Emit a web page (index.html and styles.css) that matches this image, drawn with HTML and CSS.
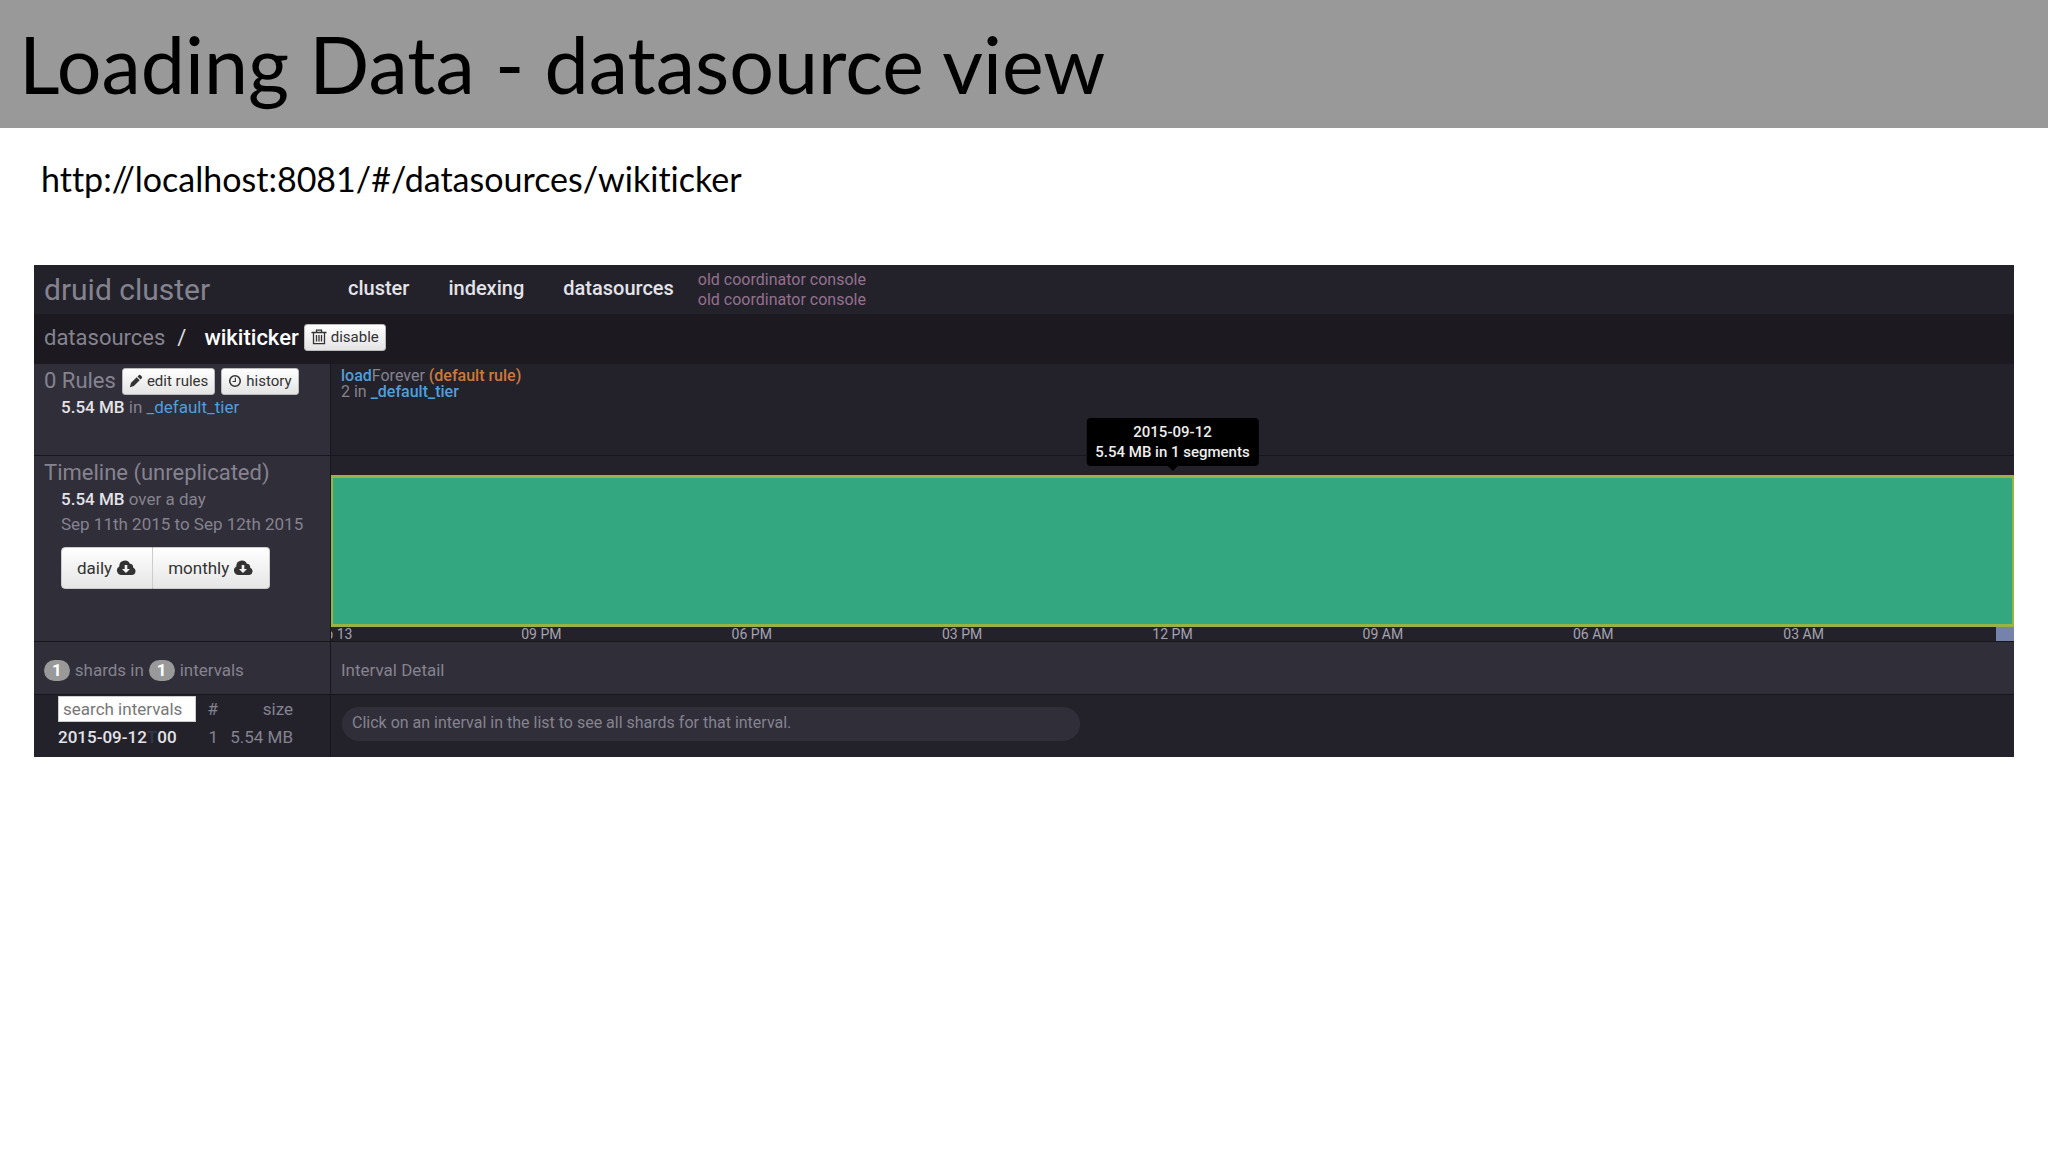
FILE: index.html
```
<!DOCTYPE html>
<html lang="en">
<head>
  <meta charset="UTF-8">
  <title>Loading Data - datasource view</title>
  <meta name="viewport" content="width=device-width, initial-scale=1.0">
  <link rel="stylesheet" href="styles.css">
</head>
<body>

  <header class="slide-title">
    <h1>Loading Data - datasource view</h1>
  </header>

  <p class="slide-url">http://localhost:8081/#/datasources/wikiticker</p>

  <main class="console">
    <div class="topbar">
      <div class="brand">druid cluster</div>
      <nav>
        <a href="#">cluster</a>
        <a href="#">indexing</a>
        <a href="#">datasources</a>
        <div class="old-links">
          <a href="#">old coordinator console</a>
          <a href="#">old coordinator console</a>
        </div>
      </nav>
    </div>

    <div class="breadcrumb">
      <a href="#">datasources</a>
      <span class="slash">/</span>
      <strong>wikiticker</strong>
      <button type="button" class="btn">
        <svg class="icon" viewBox="0 0 16 16" fill="none" stroke="currentColor" stroke-width="1.3">
          <path d="M0.500 3.500h15M5.500 3.500V1.200h5v2.300M2.500 3.500v11.200h11V3.500M5.500 6v6.500M8 6v6.500M10.500 6v6.500"/>
        </svg>
        disable
      </button>
    </div>

    <div class="row rules">
      <section class="side">
        <div class="side-head">
          <h2>0 Rules</h2>
          <button type="button" class="btn">
            <svg class="icon" viewBox="0 0 16 16" fill="currentColor">
              <path d="M1 15l1.200-4.600 6.600-6.600 3.400 3.400-6.600 6.600zM9.700 2.900l1.500-1.500q1-.9 2 0l1.400 1.400q.9 1 0 2l-1.500 1.500z"/>
            </svg>
            edit rules
          </button>
          <button type="button" class="btn">
            <svg class="icon" viewBox="0 0 16 16" fill="none" stroke="currentColor" stroke-width="1.8">
              <circle cx="8" cy="8" r="6"/>
              <path d="M8.400 4.200v4.400H5.200" stroke-width="1.3"/>
            </svg>
            history
          </button>
        </div>
        <p class="side-text"><b>5.54 MB</b> in <a href="#">_default_tier</a></p>
      </section>
      <section class="rule-list">
        <div><a href="#">load</a>Forever <span class="default-rule">(default rule)</span></div>
        <div>2 in <a href="#">_default_tier</a></div>
      </section>
    </div>

    <div class="row timeline">
      <section class="side">
        <h2>Timeline (unreplicated)</h2>
        <p class="side-text"><b>5.54 MB</b> over a day</p>
        <p class="side-text">Sep 11th 2015 to Sep 12th 2015</p>
        <div class="btn-group">
          <button type="button">daily
            <svg class="icon-cloud" viewBox="0 0 20 16">
              <path fill="currentColor" d="M5 15a4.600 4.600 0 0 1-2.200-8.600A5.600 5.600 0 0 1 13.400 3.700 3.200 3.200 0 0 1 16.600 7.400 4 4 0 0 1 16 15z"/>
              <path fill="#f4f4f4" d="M8.200 5h2.600v4h2.700l-4 4-4-4h2.700z"/>
            </svg>
          </button>
          <button type="button">monthly
            <svg class="icon-cloud" viewBox="0 0 20 16">
              <path fill="currentColor" d="M5 15a4.600 4.600 0 0 1-2.200-8.600A5.600 5.600 0 0 1 13.400 3.700 3.200 3.200 0 0 1 16.600 7.400 4 4 0 0 1 16 15z"/>
              <path fill="#f4f4f4" d="M8.200 5h2.600v4h2.700l-4 4-4-4h2.700z"/>
            </svg>
          </button>
        </div>
      </section>
      <section class="chart">
        <div class="bar">
          <div class="tooltip">2015-09-12<br>5.54 MB in 1 segments</div>
        </div>
        <div class="axis">
          <span>Sep 13</span>
          <span>09 PM</span>
          <span>06 PM</span>
          <span>03 PM</span>
          <span>12 PM</span>
          <span>09 AM</span>
          <span>06 AM</span>
          <span>03 AM</span>
          <div class="brush"></div>
        </div>
      </section>
    </div>

    <div class="row interval-head">
      <section class="side">
        <span class="badge">1</span> shards in <span class="badge">1</span> intervals
      </section>
      <section class="detail-title">Interval Detail</section>
    </div>

    <div class="row interval-body">
      <section class="interval-list">
        <table>
          <thead>
            <tr>
              <th><input type="text" placeholder="search intervals" aria-label="search intervals"></th>
              <th>#</th>
              <th>size</th>
            </tr>
          </thead>
          <tbody>
            <tr>
              <td class="interval">2015-09-12<span>T</span>00</td>
              <td>1</td>
              <td>5.54 MB</td>
            </tr>
          </tbody>
        </table>
      </section>
      <section class="detail">
        <p class="hint">Click on an interval in the list to see all shards for that interval.</p>
      </section>
    </div>
  </main>

</body>
</html>
```
FILE: styles.css
```
* {
  box-sizing: border-box;
}
body {
  margin: 0;
  background: #fff;
  color: #000;
  font-family: Lato, sans-serif;
  font-variant-ligatures: none;
}
h1, h2, p {
  margin: 0;
  font-weight: 400;
}
a {
  color: #4f9fdc;
  text-decoration: none;
}
.slide-title {
  background: #999;
  padding: 16px 19px;
}
.slide-title h1 {
  font-size: 79px;
  line-height: 96px;
}
.slide-url {
  padding: 27px 41px 62px;
  font-size: 34px;
  line-height: 48px;
}

/* druid console */
.console {
  margin: 0 34px;
  background: #23222b;
  color: #85838f;
  font-family: Roboto, sans-serif;
  font-size: 17px;
  line-height: 25px;
}
.topbar,
.row {
  display: grid;
  grid-template-columns: 15% 1fr;
}
.topbar {
  height: 49px;
  align-items: center;
}
.brand {
  padding-left: 10px;
  font-size: 30px;
}
.topbar nav {
  display: flex;
  align-items: flex-start;
  gap: 39px;
  padding-left: 17px;
}
.topbar nav a {
  color: #e3e3e8;
  font-size: 20px;
  font-weight: 500;
  line-height: 36px;
}
.topbar nav .old-links {
  display: flex;
  flex-direction: column;
  margin-left: -15px;
}
.topbar nav .old-links a {
  color: #95708f;
  font-size: 16px;
  font-weight: 400;
  line-height: 20px;
}
.breadcrumb {
  display: flex;
  align-items: center;
  height: 50px;
  padding: 0 10px 4px;
  background: #1c1a20;
  font-size: 22px;
}
.breadcrumb a {
  color: #85838f;
}
.breadcrumb .slash {
  margin: 0 18px 0 12px;
  color: #ddd;
}
.breadcrumb strong {
  margin-right: 5px;
  color: #fff;
  font-weight: 500;
}
.btn {
  display: flex;
  align-items: center;
  gap: 4px;
  height: 27px;
  padding: 0 6px;
  border: 1px solid #bbb;
  border-radius: 3px;
  background: linear-gradient(#fff, #e4e4e4);
  color: #333;
  font: 15px Roboto, sans-serif;
}
.icon {
  width: 14px;
  height: 16px;
}
.breadcrumb .icon {
  width: 16px;
}
.row {
  border-bottom: 1px solid #17161d;
}
.side {
  padding: 3px 10px;
  background: #302e39;
  border-right: 1px solid #17161d;
}
.side h2 {
  font-size: 22px;
  line-height: 28px;
}
.side-head {
  display: flex;
  align-items: center;
  gap: 6px;
}
.side-text {
  padding-left: 17px;
}
.side-text b {
  color: #e3e3e8;
  font-weight: 500;
}
.rules {
  height: 92px;
}
.rule-list {
  padding: 4px 10px;
  font-size: 16px;
  line-height: 16px;
}
.rule-list a,
.default-rule {
  font-weight: 500;
}
.default-rule {
  color: #d0783a;
}
.timeline {
  height: 186px;
}
.btn-group {
  display: flex;
  margin: 10px 0 0 17px;
}
.btn-group button {
  display: flex;
  align-items: center;
  gap: 4px;
  height: 42px;
  padding: 0 15px;
  border: 1px solid #ccc;
  background: linear-gradient(#fff, #e6e6e6);
  color: #333;
  font: 17px Roboto, sans-serif;
}
.btn-group button:first-child {
  border-radius: 4px 0 0 4px;
}
.btn-group button:last-child {
  border-left: 0;
  border-radius: 0 4px 4px 0;
}
.icon-cloud {
  width: 21px;
  height: 16px;
}
.chart {
  display: flex;
  flex-direction: column;
  min-width: 0;
  padding-top: 19px;
}
.bar {
  position: relative;
  flex: 1;
  border: 2px solid #98b344;
  border-width: 3px 2px;
  background: #33a780;
}
.tooltip {
  position: absolute;
  bottom: 100%;
  left: 50%;
  margin-bottom: 12px;
  padding: 4px 9px;
  transform: translateX(-50%);
  border-radius: 4px;
  background: #000;
  color: #eee;
  font-size: 15px;
  font-weight: 500;
  line-height: 20px;
  text-align: center;
  white-space: nowrap;
}
.tooltip::after {
  content: "";
  position: absolute;
  top: 100%;
  left: 50%;
  margin-left: -5px;
  border: 5px solid transparent;
  border-top-color: #000;
  border-bottom: 0;
}
.axis {
  position: relative;
  display: grid;
  grid-template-columns: repeat(8, 1fr);
  overflow: hidden;
  color: #a5a3ad;
  font-size: 14px;
  line-height: 14px;
}
/* labels are centred on the start of their column */
.axis span {
  margin: 0 50% 0 -50%;
  text-align: center;
}
.brush {
  position: absolute;
  top: 0;
  right: 0;
  bottom: 0;
  width: 18px;
  background: #7482ac;
}
.interval-head {
  height: 53px;
}
.interval-head .side {
  display: flex;
  align-items: center;
  gap: 5px;
  padding-top: 7px;
}
.badge {
  padding: 0 8px;
  border-radius: 11px;
  background: #999;
  color: #fff;
  font-weight: 700;
  line-height: 21px;
}
.detail-title {
  display: flex;
  align-items: center;
  padding: 7px 10px 3px;
  background: #302e39;
}
.interval-body {
  border-bottom: 0;
}
.interval-list {
  padding: 0 37px 6px 24px;
  border-right: 1px solid #17161d;
}
.interval-list table {
  width: 100%;
  border-collapse: collapse;
}
.interval-list th,
.interval-list td {
  padding: 0;
  font-weight: 400;
  line-height: 28px;
  text-align: right;
  white-space: nowrap;
}
.interval-list th:first-child,
.interval-list td:first-child {
  width: 138px;
  text-align: left;
}
.interval-list th:last-child,
.interval-list td:last-child {
  width: 75px;
}
.interval-list input {
  display: block;
  width: 138px;
  height: 26px;
  padding: 0 4px;
  border: 1px solid #ccc;
  background: #fff;
  color: #555;
  font: 17px Roboto, sans-serif;
}
.interval-list input::placeholder {
  color: #777;
}
.interval-list .interval {
  color: #e3e3e8;
  font-weight: 500;
}
.interval span {
  color: #303848;
}
.detail {
  padding: 12px 11px;
}
.hint {
  max-width: 738px;
  padding: 0 10px 2px;
  border-radius: 17px;
  background: #302e39;
  font-size: 16px;
  line-height: 32px;
}
```
